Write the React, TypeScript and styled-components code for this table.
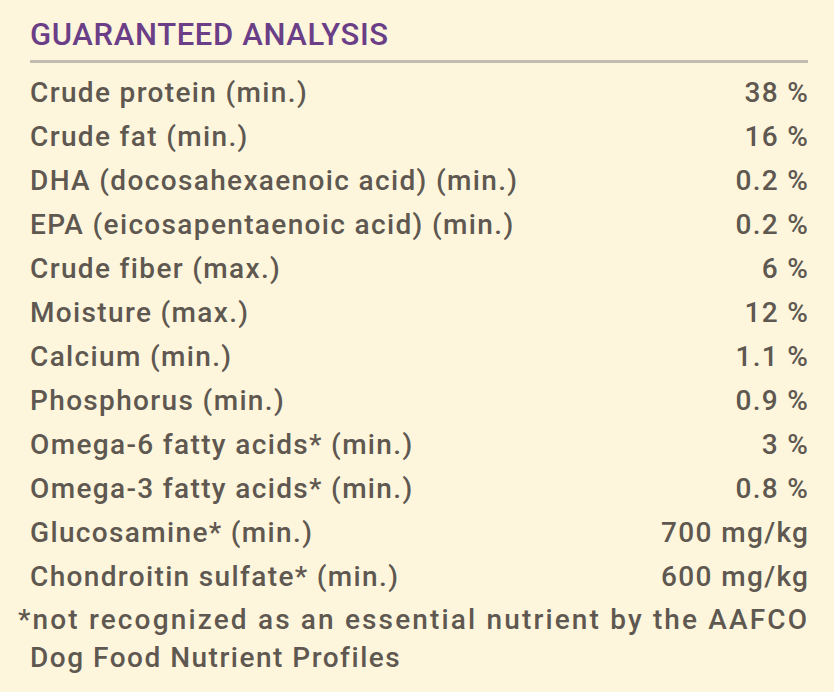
import React from 'react';
import styled, { createGlobalStyle } from 'styled-components';

const GlobalStyle = createGlobalStyle`
  html, body {
    margin: 0;
    padding: 0;
    background: #fdf6dc;
  }
`;

const Panel = styled.section`
  width: 834px;
  height: 692px;
  box-sizing: border-box;
  padding: 13px 26px 0 30px;
  background: #fdf6dc;
  font-family: Roboto, 'Liberation Sans', sans-serif;
  font-weight: 500;
  color: #5f5851;
  overflow: hidden;
`;

const Title = styled.h2`
  margin: 0;
  font-size: 31px;
  font-weight: 500;
  line-height: 44px;
  color: #6b3f87;
  letter-spacing: 0.65px;
  border-bottom: 3px solid #c2bcae;
  padding-bottom: 3px;
`;

const Table = styled.div`
  display: flex;
  flex-direction: column;
  padding-top: 8px;
`;

const Row = styled.div`
  display: flex;
  justify-content: space-between;
  align-items: baseline;
  height: 44px;
  font-size: 28px;
  line-height: 44px;
  letter-spacing: 1.35px;
`;

const Label = styled.span``;

const Value = styled.span`
  text-align: right;
  margin-right: -1.35px;
`;

const Footnote = styled.div`
  margin: 2px -26px 0 -12px;
  font-size: 28px;
  line-height: 38px;
  white-space: nowrap;
`;

const FootnoteLine = styled.div<{ $indent?: boolean }>`
  padding-left: ${p => (p.$indent ? '12px' : '0')};
  letter-spacing: ${p => (p.$indent ? '1.5px' : '2.15px')};
`;

const rows: [string, string][] = [
  ['Crude protein (min.)', '38 %'],
  ['Crude fat (min.)', '16 %'],
  ['DHA (docosahexaenoic acid) (min.)', '0.2 %'],
  ['EPA (eicosapentaenoic acid) (min.)', '0.2 %'],
  ['Crude fiber (max.)', '6 %'],
  ['Moisture (max.)', '12 %'],
  ['Calcium (min.)', '1.1 %'],
  ['Phosphorus (min.)', '0.9 %'],
  ['Omega-6 fatty acids* (min.)', '3 %'],
  ['Omega-3 fatty acids* (min.)', '0.8 %'],
  ['Glucosamine* (min.)', '700 mg/kg'],
  ['Chondroitin sulfate* (min.)', '600 mg/kg'],
];

const App: React.FC = () => (
  <>
    <GlobalStyle />
    <Panel>
      <Title>GUARANTEED ANALYSIS</Title>
      <Table>
        {rows.map(([label, value]) => (
          <Row key={label}>
            <Label>{label}</Label>
            <Value>{value}</Value>
          </Row>
        ))}
      </Table>
      <Footnote>
        <FootnoteLine>*not recognized as an essential nutrient by the AAFCO</FootnoteLine>
        <FootnoteLine $indent>Dog Food Nutrient Profiles</FootnoteLine>
      </Footnote>
    </Panel>
  </>
);

export default App;
